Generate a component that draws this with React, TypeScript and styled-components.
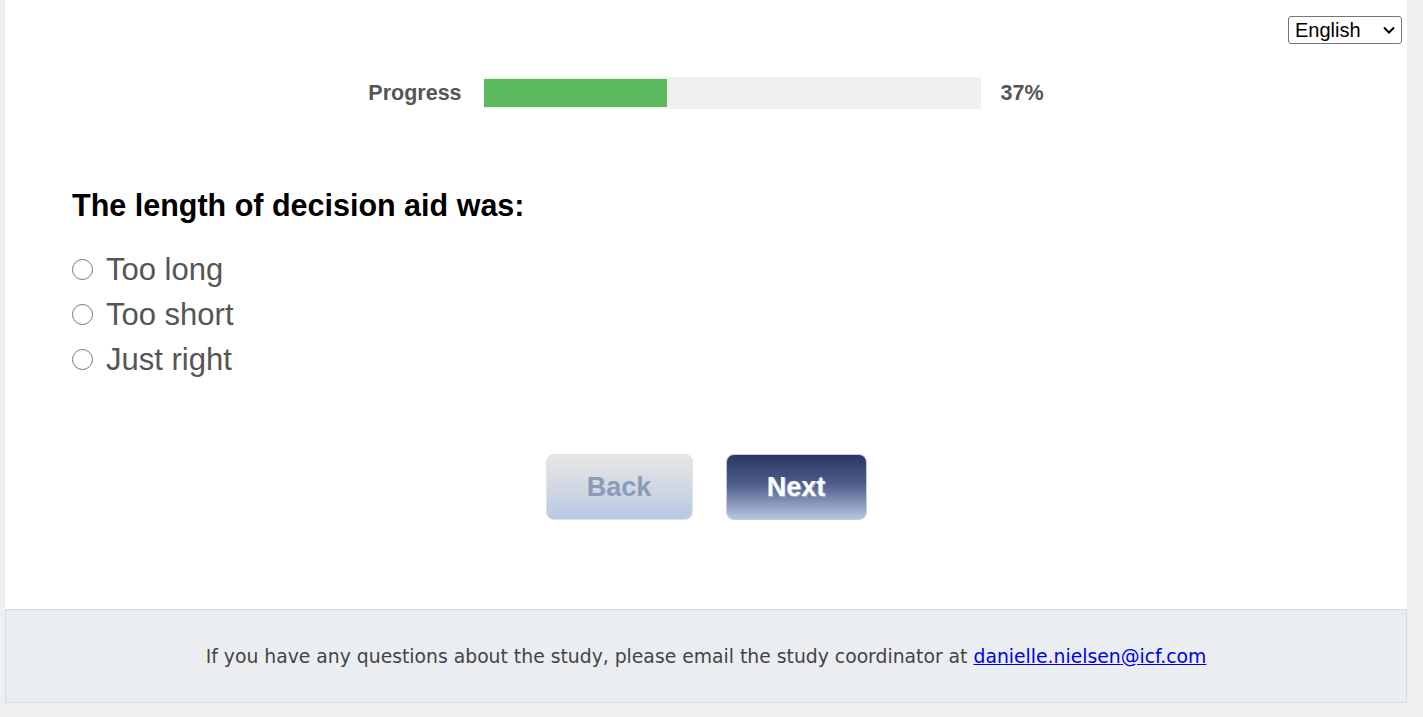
import React from "react";
import styled, { createGlobalStyle } from "styled-components";

const Global = createGlobalStyle`
  html, body { margin: 0; padding: 0; background: #efefef; }
  body { font-family: "Liberation Sans", Arial, sans-serif; }
`;

const Page = styled.div`
  width: 1402px;
  margin-left: 5px;
  background: #ffffff;
`;

const Main = styled.div`
  display: flex;
  flex-direction: column;
  padding: 16px 5px 0 0;
  height: 609px;
  box-sizing: border-box;
`;

const TopBar = styled.div`
  display: flex;
  justify-content: flex-end;
`;

const SelectWrap = styled.span`
  position: relative;
  display: inline-flex;
`;

const LangSelect = styled.select`
  appearance: none;
  -webkit-appearance: none;
  font-family: "Liberation Sans", Arial, sans-serif;
  font-size: 20px;
  height: 28px;
  width: 114px;
  padding: 0 24px 0 6px;
  border: 1px solid #767676;
  border-radius: 3px;
  color: #000;
  background: #fff;
`;

const Chevron = styled.svg`
  position: absolute;
  right: 7px;
  top: 10px;
  width: 12px;
  height: 8px;
  pointer-events: none;
`;

const ProgressRow = styled.div`
  display: flex;
  align-items: center;
  justify-content: center;
  margin-top: 33px;
  margin-left: 5px;
  font-weight: bold;
  font-size: 21.5px;
  color: #555;
`;

const ProgressLabel = styled.span`
  margin-right: 22px;
`;

const Track = styled.div`
  width: 497px;
  height: 32px;
  background: #f0f0f0;
  display: flex;
  align-items: center;
`;

const Fill = styled.div`
  height: 28px;
  background: #5cb85c;
`;

const Percent = styled.span`
  margin-left: 20px;
`;

const Question = styled.h2`
  margin: 79px 0 0 67px;
  font-size: 30.5px;
  font-weight: bold;
  color: #000;
  line-height: 34px;
`;

const Options = styled.div`
  display: flex;
  flex-direction: column;
  margin: 30px 0 0 67px;
  gap: 10px;
`;

const Option = styled.label`
  display: flex;
  align-items: center;
  font-size: 31px;
  color: #555;
  line-height: 35px;
`;

const Radio = styled.span`
  width: 21px;
  height: 21px;
  border: 1.5px solid #767676;
  border-radius: 50%;
  margin-right: 13px;
  box-sizing: border-box;
`;

const Buttons = styled.div`
  display: flex;
  justify-content: center;
  gap: 33px;
  margin-top: 77px;
  margin-right: -5px;
`;

const NavButton = styled.button<{ $primary?: boolean }>`
  width: ${(p) => (p.$primary ? 141 : 147)}px;
  height: 66px;
  border-radius: 8px;
  border: 1px solid ${(p) => (p.$primary ? "#c2cce0" : "#e2e2e2")};
  font-family: "Liberation Sans", Arial, sans-serif;
  font-size: 27px;
  font-weight: bold;
  background: ${(p) =>
    p.$primary
      ? "linear-gradient(to bottom, #2a3764 0%, #4e5d8a 45%, #b6c5e0 100%)"
      : "linear-gradient(to bottom, #e6e6e6 0%, #d2d8e2 50%, #b6c8e3 100%)"};
  color: ${(p) => (p.$primary ? "#ffffff" : "#8a9cb8")};
  text-shadow: ${(p) => (p.$primary ? "1px 1px 1px #aab4d8" : "none")};
`;

const Footer = styled.footer`
  height: 92px;
  background: #ebeef1;
  border: 1px solid #d6dbe0;
  display: flex;
  align-items: center;
  justify-content: center;
  font-family: "DejaVu Sans", Verdana, sans-serif;
  font-size: 18.8px;
  color: #444;
  letter-spacing: 0;
`;

const Mail = styled.a`
  color: #0000ee;
  margin-left: 6px;
`;

export default function App() {
  const pct = 37;
  return (
    <>
      <Global />
      <Page>
        <Main>
          <TopBar>
            <SelectWrap>
              <LangSelect defaultValue="en">
                <option value="en">English</option>
              </LangSelect>
              <Chevron viewBox="0 0 12 8">
                <path d="M1 1.5 L6 6.5 L11 1.5" fill="none" stroke="#000" strokeWidth="2" />
              </Chevron>
            </SelectWrap>
          </TopBar>
          <ProgressRow>
            <ProgressLabel>Progress</ProgressLabel>
            <Track>
              <Fill style={{ width: `${pct}%` }} />
            </Track>
            <Percent>{pct}%</Percent>
          </ProgressRow>
          <Question>The length of decision aid was:</Question>
          <Options>
            <Option><Radio />Too long</Option>
            <Option><Radio />Too short</Option>
            <Option><Radio />Just right</Option>
          </Options>
          <Buttons>
            <NavButton>Back</NavButton>
            <NavButton $primary>Next</NavButton>
          </Buttons>
        </Main>
        <Footer>
          If you have any questions about the study, please email the study coordinator at
          <Mail href="#">danielle.nielsen@icf.com</Mail>
        </Footer>
      </Page>
    </>
  );
}
